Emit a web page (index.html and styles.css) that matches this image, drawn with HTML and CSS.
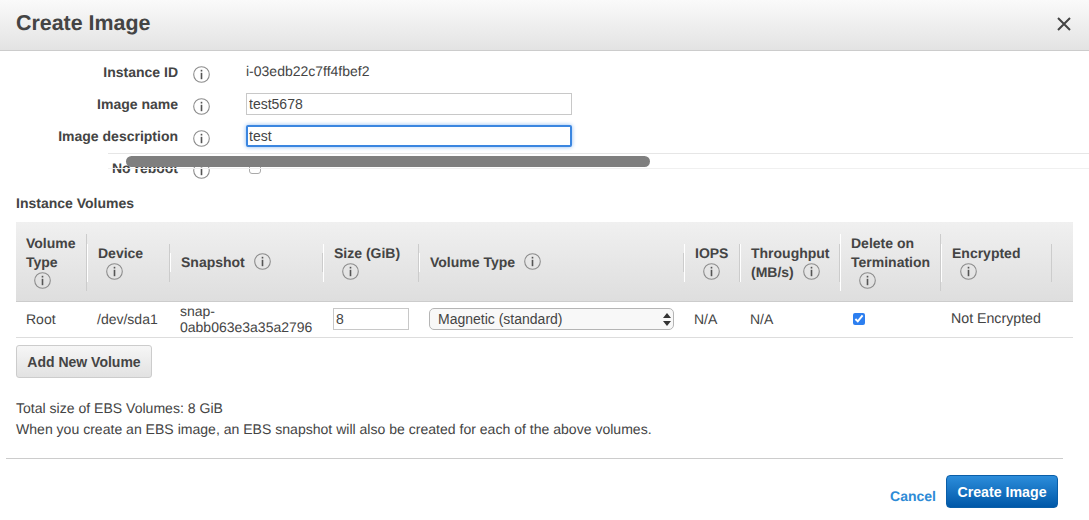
FILE: index.html
```html
<!DOCTYPE html>
<html lang="en">
<head>
    <meta charset="UTF-8">
    <title>Create Image</title>
    <link rel="stylesheet" href="styles.css">
</head>
<body>
    <svg class="iconDefs" width="0" height="0">
        <symbol id="info" viewBox="0 0 17 17">
            <circle cx="8.5" cy="8.5" r="7.8" fill="none" stroke="#8c8c8c" stroke-width="1.1"/>
            <rect x="7.7" y="3.8" width="1.6" height="1.7" fill="#555"/>
            <rect x="7.7" y="6.8" width="1.6" height="6.4" fill="#555"/>
        </symbol>
    </svg>

    <div class="dialog">
        <div class="dialogHeader">
            <h1>Create Image</h1>
            <svg class="closeIcon" width="14" height="14" viewBox="0 0 14 14">
                <path d="M1 1 L13 13 M13 1 L1 13" stroke="#444" stroke-width="2" fill="none"/>
            </svg>
        </div>

        <div class="formArea">
            <div class="formRow">
                <label class="formLabel">Instance ID</label>
                <svg class="info formInfo"><use href="#info"/></svg>
                <span class="formValue">i-03edb22c7ff4fbef2</span>
            </div>
            <div class="formRow">
                <label class="formLabel">Image name</label>
                <svg class="info formInfo"><use href="#info"/></svg>
                <input class="textInput" type="text" value="test5678">
            </div>
            <div class="formRow">
                <label class="formLabel">Image description</label>
                <svg class="info formInfo"><use href="#info"/></svg>
                <input class="textInput focused" type="text" value="test">
            </div>
            <div class="formRow">
                <label class="formLabel">No reboot</label>
                <svg class="info formInfo"><use href="#info"/></svg>
                <input class="rebootCheck" type="checkbox">
            </div>
            <div class="scrollTrack"><div class="scrollThumb"></div></div>
        </div>

        <h2 class="sectionTitle">Instance Volumes</h2>

        <table class="volumes">
            <colgroup>
                <col class="c1"><col class="c2"><col class="c3"><col class="c4"><col class="c5">
                <col class="c6"><col class="c7"><col class="c8"><col class="c9"><col class="c10">
            </colgroup>
            <thead>
                <tr>
                    <th><div class="thInner firstHead">Volume<br>Type<br><svg class="info offset"><use href="#info"/></svg></div></th>
                    <th><div class="thInner">Device<br><svg class="info offset"><use href="#info"/></svg></div></th>
                    <th><div class="thInner">Snapshot <svg class="info inlineInfo"><use href="#info"/></svg></div></th>
                    <th><div class="thInner">Size (GiB)<br><svg class="info offset"><use href="#info"/></svg></div></th>
                    <th><div class="thInner">Volume Type <svg class="info inlineInfo"><use href="#info"/></svg></div></th>
                    <th><div class="thInner">IOPS<br><svg class="info offset"><use href="#info"/></svg></div></th>
                    <th><div class="thInner">Throughput<br>(MB/s) <svg class="info inlineInfo"><use href="#info"/></svg></div></th>
                    <th><div class="thInner">Delete on<br>Termination<br><svg class="info offset"><use href="#info"/></svg></div></th>
                    <th><div class="thInner">Encrypted<br><svg class="info offset"><use href="#info"/></svg></div></th>
                    <th></th>
                </tr>
            </thead>
            <tbody>
                <tr>
                    <td>Root</td>
                    <td>/dev/sda1</td>
                    <td class="snapCell">snap-<br>0abb063e3a35a2796</td>
                    <td><input class="sizeInput" type="text" value="8"></td>
                    <td>
                        <div class="selectWrap">
                            <select class="typeSelect">
                                <option>Magnetic (standard)</option>
                            </select>
                            <svg class="selectArrows" width="8" height="13" viewBox="0 0 8 13">
                                <path d="M4 0 L8 5 L0 5 Z M0 8 L8 8 L4 13 Z" fill="#333"/>
                            </svg>
                        </div>
                    </td>
                    <td>N/A</td>
                    <td>N/A</td>
                    <td><input class="deleteCheck" type="checkbox" checked></td>
                    <td class="encryptedCell">Not Encrypted</td>
                    <td></td>
                </tr>
            </tbody>
        </table>

        <button class="addBtn">Add New Volume</button>

        <div class="notes">
            <p>Total size of EBS Volumes: 8 GiB</p>
            <p>When you create an EBS image, an EBS snapshot will also be created for each of the above volumes.</p>
        </div>

        <div class="dialogFooter">
            <a class="cancelLink" href="#">Cancel</a>
            <button class="createBtn">Create Image</button>
        </div>
    </div>
</body>
</html>
```

FILE: styles.css
```css
body {
    margin: 0;
    font-family: 'Liberation Sans', Arial, sans-serif;
    font-size: 14px;
    color: #444;
    background-color: white;
    overflow: hidden;
    text-rendering: geometricPrecision;
}
.iconDefs {
    position: absolute;
}
.dialog {
    width: 1089px;
    height: 520px;
}
.info {
    width: 17px;
    height: 17px;
    display: inline-block;
}

/* Header */
.dialogHeader {
    height: 47px;
    display: flex;
    align-items: center;
    justify-content: space-between;
    padding: 0 18px 3px 16px;
    background: linear-gradient(#fafafa, #e3e3e3);
    border-bottom: 1px solid #ccc;
}
.dialogHeader h1 {
    margin: 0;
    font-size: 21.4px;
    color: #444;
}

/* Form */
.formArea {
    position: relative;
    padding-top: 5px;
}
.formRow {
    display: flex;
    align-items: center;
    height: 32px;
}
.formLabel {
    width: 178px;
    text-align: right;
    font-weight: bold;
}
.formInfo {
    margin: 4px 36px 0 15px;
}
.formValue {
    margin-top: -2px;
}
.textInput {
    box-sizing: border-box;
    width: 326px;
    height: 22px;
    margin: 0;
    padding: 0 2px;
    border: 1px solid #c8c8c8;
    font-family: inherit;
    font-size: 14px;
    color: #444;
    outline: none;
}
.focused {
    border: 2px solid #3b86e0;
    padding: 0 1px;
    border-radius: 2px;
    box-shadow: 0 0 4px #8ab8f0;
}
.rebootCheck {
    appearance: none;
    box-sizing: border-box;
    width: 12px;
    height: 12px;
    margin: 0 0 0 3px;
    border: 1px solid #aaa;
    border-radius: 3px;
    background-color: white;
}
.scrollTrack {
    position: absolute;
    left: 108px;
    right: 0;
    top: 102px;
    height: 14px;
    border-top: 1px solid #e6e6e6;
    border-bottom: 1px solid #f0f0f0;
}
.scrollThumb {
    position: absolute;
    left: 18px;
    top: 2px;
    width: 524px;
    height: 11px;
    border-radius: 6px;
    background-color: #7f7f7f;
}

/* Volumes table */
.sectionTitle {
    margin: 9px 0 9px 16px;
    font-size: 14px;
    line-height: 20px;
    color: #444;
}
.volumes {
    width: 1057px;
    margin-left: 16px;
    table-layout: fixed;
    border-collapse: collapse;
}
.c1 { width: 71px; }
.c2 { width: 83px; }
.c3 { width: 153px; }
.c4 { width: 96px; }
.c5 { width: 265px; }
.c6 { width: 56px; }
.c7 { width: 100px; }
.c8 { width: 101px; }
.c9 { width: 111px; }
.c10 { width: 21px; }
.volumes th {
    height: 77px;
    padding: 2px 0 0;
    text-align: left;
    vertical-align: middle;
    background: linear-gradient(#f0f0f0, #dedede);
    border-bottom: 1px solid #ccc;
}
.thInner {
    padding-left: 10px;
    line-height: 19px;
    border-left: 1px solid white;
    border-right: 1px solid #ccc;
}
.firstHead {
    border-left: none;
}
.offset {
    margin-left: 8px;
    vertical-align: -3px;
}
.inlineInfo {
    margin-left: 5px;
    vertical-align: -3px;
}
.volumes td {
    height: 33px;
    padding: 0 0 2px 10px;
    border-bottom: 1px solid #ddd;
    line-height: 16px;
}
.snapCell {
    white-space: nowrap;
}
.volumes .encryptedCell {
    font-size: 14.2px;
}
.sizeInput {
    box-sizing: border-box;
    width: 76px;
    height: 22px;
    padding: 0 2px;
    border: 1px solid #c8c8c8;
    font-family: inherit;
    font-size: 14px;
    color: #444;
}
.selectWrap {
    position: relative;
    width: 245px;
}
.typeSelect {
    appearance: none;
    display: block;
    box-sizing: border-box;
    width: 245px;
    height: 22px;
    padding: 0 8px;
    border: 1px solid #b5b5b5;
    border-radius: 5px;
    background-color: #f8f8f8;
    font-family: inherit;
    font-size: 14px;
    color: #444;
}
.selectArrows {
    position: absolute;
    right: 3px;
    top: 5px;
}
.deleteCheck {
    display: block;
    width: 12px;
    height: 12px;
    margin: 0 0 0 3px;
    accent-color: #2d7ff0;
}

/* Buttons and notes */
.addBtn {
    display: block;
    box-sizing: border-box;
    width: 136px;
    height: 33px;
    margin: 7px 0 0 16px;
    padding: 0;
    border: 1px solid #ccc;
    border-radius: 3px;
    background: linear-gradient(#f6f6f6, #e2e2e2);
    font-family: inherit;
    font-size: 14px;
    font-weight: bold;
    color: #444;
}
.notes {
    margin: 20px 0 0 16px;
    font-size: 14.05px;
    line-height: 21px;
}
.notes p {
    margin: 0;
}
.dialogFooter {
    display: flex;
    justify-content: flex-end;
    align-items: flex-end;
    gap: 10px;
    width: 1057px;
    box-sizing: border-box;
    margin: 18px 0 0 6px;
    padding: 16px 5px 0 0;
    border-top: 1px solid #ccc;
}
.cancelLink {
    color: #2d8bd6;
    font-weight: bold;
    text-decoration: none;
    line-height: 24px;
}
.createBtn {
    box-sizing: border-box;
    width: 112px;
    height: 33px;
    padding: 0;
    border: 1px solid #0a5ea8;
    border-radius: 4px;
    background: linear-gradient(#2c8ddb, #0058a8);
    font-family: inherit;
    font-size: 14.2px;
    font-weight: bold;
    color: white;
}
```
